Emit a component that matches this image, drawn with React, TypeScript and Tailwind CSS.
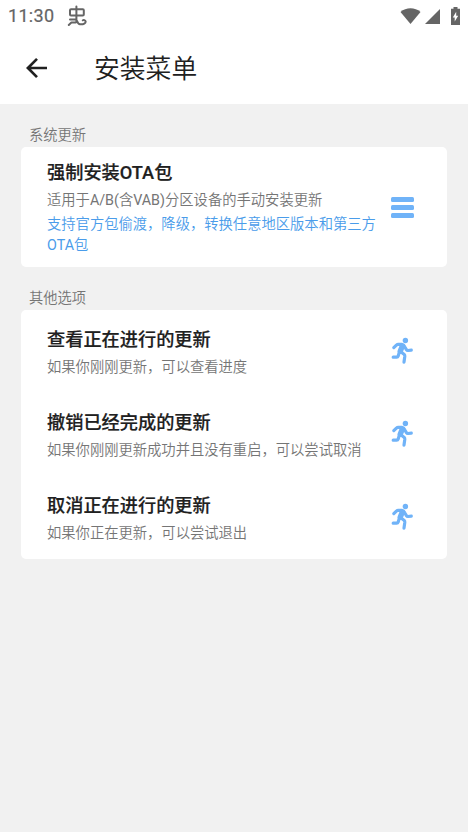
import type { ReactNode } from 'react';

function StatusBar() {
  return (
    <div className="flex h-[32px] items-center text-[#656565]">
      <span className="ml-[8px] w-[59px] text-[18px] leading-[32px] font-normal tracking-[0.3px] [-webkit-text-stroke:0.2px_#656565]">11:30</span>
      <svg className="h-[22px] w-[20px]" viewBox="0 0 20 22" fill="none" stroke="currentColor" strokeWidth="2" strokeLinecap="round" strokeLinejoin="round">
        <path d="M9.4 1.5V17M4 4.3H15.8Q16.8 4.3 16.8 5.3V9.6Q16.8 10.6 15.8 10.6H4Q3 10.6 3 9.6V5.3Q3 4.3 4 4.3ZM3 14.4H8.5C11 14.4 9.6 19 13 19.3C16.6 19.6 19 18 18.6 16.4C18.2 15.2 16.6 14.6 15.8 15.4M1.8 20L4.4 17.6H8.8" />
      </svg>
      <svg className="ml-auto h-[16px] w-[21px]" viewBox="0 0 21 16" fill="currentColor">
        <path d="M0.5 4C6 -1 15 -1 20.5 4L10.5 16Z" />
      </svg>
      <svg className="ml-[4px] h-[15px] w-[15px]" viewBox="0 0 15 15" fill="currentColor">
        <path d="M0 15L15 0V15Z" />
      </svg>
      <svg className="mr-[8px] ml-[11px] h-[18px] w-[9px]" viewBox="0 0 9 18">
        <path d="M2.5 0H6.5V1.8H9V18H0V1.8H2.5Z" fill="currentColor" />
        <path d="M5.2 4.8V8.8H7.2L3.7 14.5V10.5H1.8Z" fill="#fff" />
      </svg>
    </div>
  );
}

function Latin({ children }: { children: string }) {
  return <span className="font-normal">{children}</span>;
}

function Row({ title, text, icon, children }: { title: string; text: ReactNode; icon: ReactNode; children?: ReactNode }) {
  return (
    <div className="flex items-center pl-[26px]">
      <div className="w-[344px] shrink-0">
        <h2 className="text-[18.2px] leading-[30px] font-medium whitespace-nowrap text-[#202020] [-webkit-text-stroke:0.2px_#202020]">{title}</h2>
        <p className="h-[24px] text-[14.3px] leading-[24px] font-[350] whitespace-nowrap text-[#757575]">{text}</p>
        {children}
      </div>
      {icon}
    </div>
  );
}

const runner = (
  <svg className="mb-[2px] ml-[-1px] h-[28px] w-[24px] text-[#70b3f8]" viewBox="0 0 24 28" fill="none" stroke="currentColor" strokeWidth="3.2" strokeLinecap="round" strokeLinejoin="round">
    <circle cx="15.4" cy="3.5" r="2.7" fill="currentColor" stroke="none" />
    <path d="M3.8 10.6L6.4 8.1Q7.2 7.4 8.2 7.4H11.8Q13.8 7.7 14.7 9.7L16.4 12.6Q17 13.6 18 13.5L21.3 13.2" />
    <path d="M12.2 9.4L10.2 14.2" strokeWidth="5.4" />
    <path d="M10.8 14.8L14 17.2Q14.9 18 14.8 19.2L14 25.1M8.8 16.8L8.2 19Q7.8 20.2 6.7 20.2H3.2" />
  </svg>
);

const bars = (
  <div className="mt-[1px] flex w-[23px] flex-col gap-[3px]">
    <div className="h-[5px] rounded-[1.5px] bg-[#70b3f8]" />
    <div className="h-[5px] rounded-[1.5px] bg-[#70b3f8]" />
    <div className="h-[5px] rounded-[1.5px] bg-[#70b3f8]" />
  </div>
);

export default function App() {
  return (
    <div className="h-[832px] w-[468px] overflow-hidden bg-[#f1f1f1] font-[Roboto,'Noto_Sans_CJK_SC',sans-serif]">
      <header className="h-[104px] bg-white">
        <StatusBar />
        <div className="flex h-[72px] items-center">
          <svg className="ml-[26px] h-[22px] w-[22px]" viewBox="0 0 22 22" fill="none" stroke="#202020" strokeWidth="2.7">
            <path d="M21 11H2M11 1.9L1.9 11L11 20.1" />
          </svg>
          <h1 className="mt-[2px] ml-[46px] text-[25.8px] font-[350] text-[#202020]">安装菜单</h1>
        </div>
      </header>
      <main className="px-[21px]">
        <div className="h-[43px] pt-[20px] pl-[8px] text-[14.27px] leading-[22px] font-[350] text-[#757575]">系统更新</div>
        <section className="h-[120px] rounded-[5px] bg-white pt-[11px]">
          <Row
            title="强制安装OTA包"
            text={<>适用于<Latin>A/B(</Latin>含<Latin>VAB)</Latin>分区设备的手动安装更新</>}
            icon={bars}
          >
            <p className="mt-[2px] w-[332px] text-[14.3px] leading-[21px] font-[350] text-[#4a9cea]">
              支持官方包偷渡，降级，转换任意地区版本和第三方<br /><Latin>OTA</Latin>包
            </p>
          </Row>
        </section>
        <div className="h-[43px] pt-[20px] pl-[8px] text-[14.27px] leading-[22px] font-[350] text-[#757575]">其他选项</div>
        <section className="flex h-[249px] flex-col gap-[29px] rounded-[5px] bg-white pt-[15px]">
          <Row title="查看正在进行的更新" text="如果你刚刚更新，可以查看进度" icon={runner} />
          <Row title="撤销已经完成的更新" text="如果你刚刚更新成功并且没有重启，可以尝试取消" icon={runner} />
          <Row title="取消正在进行的更新" text="如果你正在更新，可以尝试退出" icon={runner} />
        </section>
      </main>
    </div>
  );
}
